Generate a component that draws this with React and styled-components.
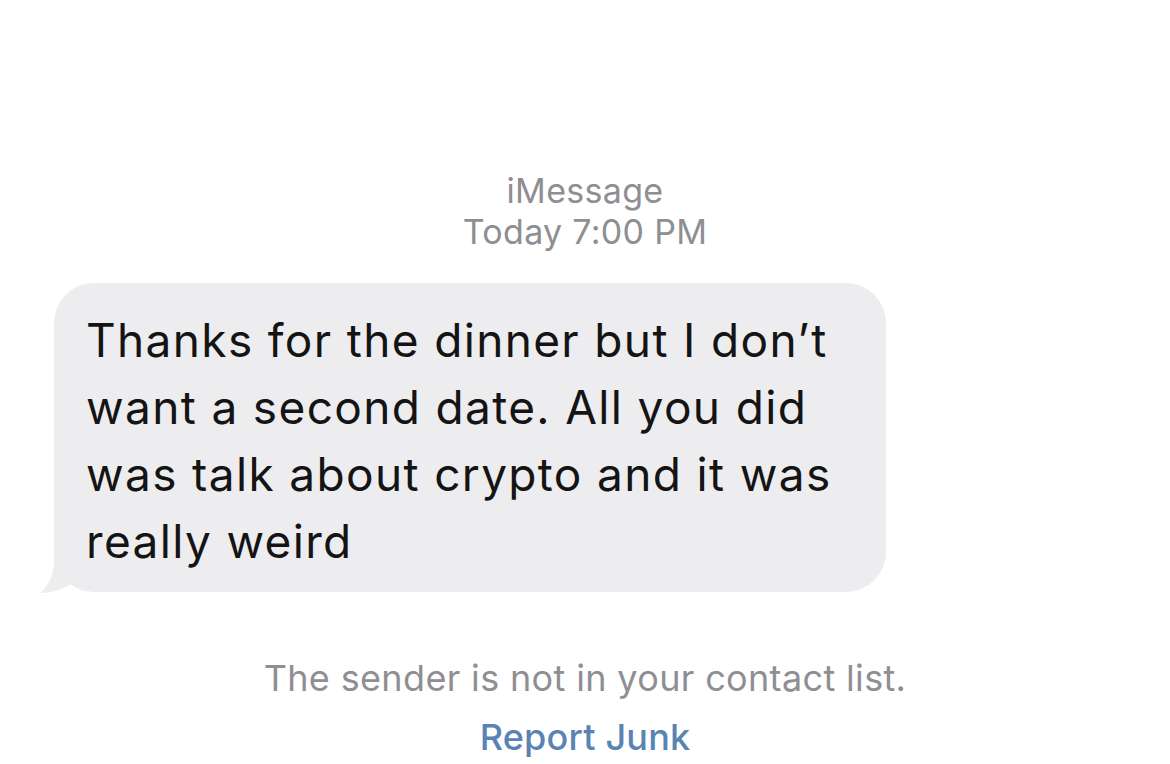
import React from "react";
import styled, { createGlobalStyle } from "styled-components";

const Global = createGlobalStyle`
  html, body { margin: 0; padding: 0; background: #ffffff; }
  body { font-family: Inter, "Noto Sans", sans-serif; -webkit-font-smoothing: antialiased; }
`;

const Page = styled.div`
  width: 1170px;
  height: 764px;
  box-sizing: border-box;
  padding-top: 170px;
  display: flex;
  flex-direction: column;
  align-items: center;
  background: #ffffff;
  overflow: hidden;
`;

const Header = styled.div`
  display: flex;
  flex-direction: column;
  align-items: center;
  color: #8e8e93;
  font-size: 34px;
  letter-spacing: 0.3px;
  line-height: 41px;
  font-weight: 400;
`;

const Bubble = styled.div`
  position: relative;
  align-self: flex-start;
  margin: 31px 0 0 54px;
  width: 832px;
  box-sizing: border-box;
  padding: 24px 20px 17px 32px;
  background: #ededf0;
  border-radius: 40px;
  color: #141414;
  font-size: 46px;
  letter-spacing: 1.35px;
  line-height: 67px;
  white-space: nowrap;
`;

const Tail = styled.svg`
  position: absolute;
  left: -16px;
  bottom: -1px;
  width: 48px;
  height: 46px;
`;

const Notice = styled.div`
  margin-top: ${(p) => p.$gap}px;
  color: ${(p) => (p.$link ? "#5a83b3" : "#8e8e93")};
  font-weight: ${(p) => (p.$link ? 500 : 400)};
  font-size: 36px;
  letter-spacing: ${(p) => (p.$link ? 0.2 : 0.35)}px;
  line-height: 41px;
`;

export default function App() {
  return (
    <>
      <Global />
      <Page>
        <Header>
          <span>iMessage</span>
          <span>Today 7:00 PM</span>
        </Header>
        <Bubble>
          <Tail viewBox="0 0 48 46">
            <path
              d="M16 0 L16 14 C16 29 10 39 2 46 C14 46 26 42 34 36 L34 0 Z"
              fill="#ededf0"
            />
          </Tail>
          Thanks for the dinner but I don’t
          <br />
          want a second date. All you did
          <br />
          was talk about crypto and it was
          <br />
          really weird
        </Bubble>
        <Notice $gap={66}>The sender is not in your contact list.</Notice>
        <Notice $gap={18} $link>
          Report Junk
        </Notice>
      </Page>
    </>
  );
}
